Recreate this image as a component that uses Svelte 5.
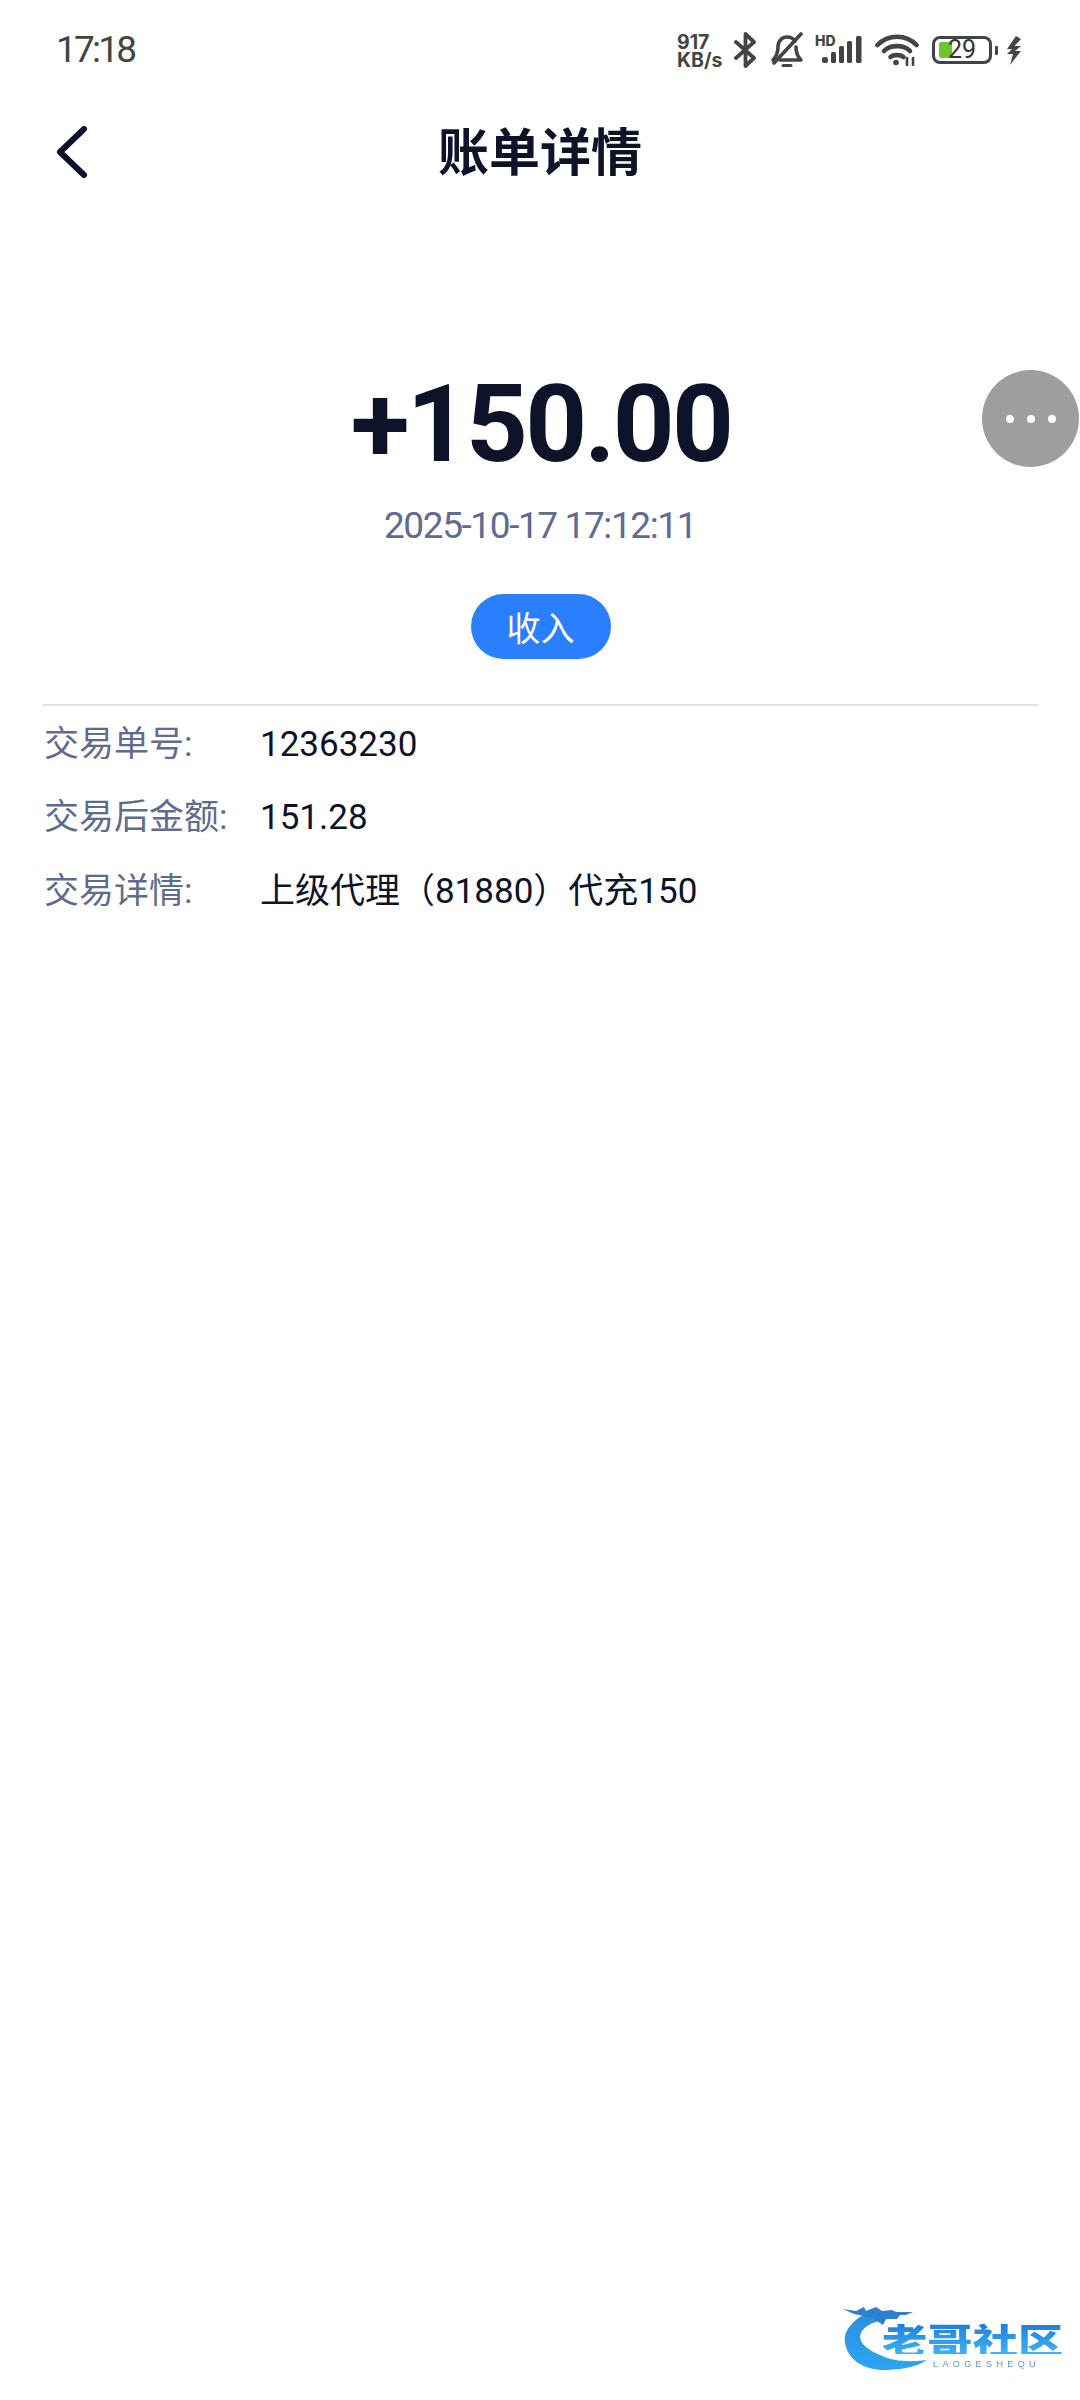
<script>
  const rows = [
    { label: '交易单号:', value: '12363230' },
    { label: '交易后金额:', value: '151.28' },
    { label: '交易详情:', value: '上级代理（81880）代充150' }
  ];
</script>

<div class="page">
  <header class="status">
    <span class="time">17:18</span>
    <div class="icons">
      <div class="speed"><span>917</span><span>KB/s</span></div>
      <svg class="bt" width="23" height="36" viewBox="0 0 23 36" fill="none" stroke="#444" stroke-width="3.8" stroke-linejoin="round" stroke-linecap="round"><path d="M2 10 L20 26 L11.5 34 V2 L20 10 L2 26" /></svg>
      <svg class="bell" width="34" height="36" viewBox="0 0 34 36" fill="none" stroke="#444" stroke-width="3.6" stroke-linecap="round" stroke-linejoin="round">
        <path d="M3 28 C7 24 8 21 8 15 C8 9 12 5 17 5 C20 5 23 6 25 9" />
        <path d="M26 15 C26 21 27 24 31 28 H10" />
        <path d="M4 31 L31 2" />
        <path d="M13 33.5 H21" stroke-width="3" />
      </svg>
      <svg class="signal" width="48" height="36" viewBox="0 -6 48 36" fill="#444">
        <text x="0" y="11" font-family="Inter, sans-serif" font-size="14" font-weight="800">HD</text>
        <rect x="7" y="22" width="6" height="6" rx="2" />
        <rect x="16" y="17" width="5" height="11" rx="1.5" />
        <rect x="24" y="11" width="5" height="17" rx="1.5" />
        <rect x="32" y="6" width="5" height="22" rx="1.5" />
        <rect x="41" y="1" width="5.5" height="27" rx="1.5" />
      </svg>
      <svg class="wifi" width="44" height="32" viewBox="0 0 44 32" fill="none" stroke="#444" stroke-width="4.6" stroke-linecap="round">
        <path d="M2.5 11 C13 0 31 0 41.5 11" />
        <path d="M9 17 C15 10.5 29 10.5 35 17" />
        <path d="M15.5 23 C18.5 20.5 25.5 20.5 28.5 23" />
        <circle cx="21" cy="28.5" r="2.8" fill="#444" stroke="none" />
        <path d="M32 24 V31 M38 24 V31" stroke-width="2.6" />
      </svg>
      <div class="battery">
        <div class="shell"><span class="level"></span><span class="pct">29</span></div>
        <span class="tip"></span>
      </div>
      <svg class="bolt" width="16" height="29" viewBox="0 0 16 29" fill="#444"><path d="M10 0 L1 13 H6 L1 18 H7 L4 29 L15 15 H9 L15 10 H8.5 L15 3 Z" /></svg>
    </div>
  </header>

  <nav class="nav">
    <svg class="back" width="32" height="52" viewBox="0 0 32 52" fill="none" stroke="#0d1329" stroke-width="6" stroke-linecap="round" stroke-linejoin="round"><path d="M28 3 L4 26 L28 49" /></svg>
    <h1>账单详情</h1>
  </nav>

  <section class="summary">
    <div class="amount">+150.00</div>
    <div class="date">2025-10-17 17:12:11</div>
    <div class="pill">收入</div>
  </section>

  <section class="details">
    {#each rows as row}
      <div class="row">
        <span class="label">{row.label}</span>
        <span class="value">{row.value}</span>
      </div>
    {/each}
  </section>

  <button class="fab" aria-label="更多"><i></i><i></i><i></i></button>

  <div class="mark">
    <svg class="dragon" width="110" height="70" viewBox="0 0 110 70">
      <defs>
        <linearGradient id="dr" x1="0" y1="0" x2="0" y2="1">
          <stop offset="0" stop-color="#2d8fdc" />
          <stop offset="1" stop-color="#2aa6f2" />
        </linearGradient>
      </defs>
      <path fill="url(#dr)" d="M21 10 C8 18 1 28 3 38 C6 56 24 66 46 65 C62 64 74 62 85 55 C70 57 52 57 38 50 C24 44 14 36 20 26 C24 20 32 17 41 15 L34 6 C29 6 25 7 21 10 Z" />
      <path fill="#2b80cf" d="M1 4 L14 6 L22 2 L24 6 L34 2 L40 6 L50 5 L54 7 L71 7 L64 10 L58 10 L55 14 L44 14 L41 20 L32 14 L22 11 L12 9 Z" />
    </svg>
    <div class="mark-title">老哥社区</div>
    <div class="mark-sub">LAOGESHEQU</div>
  </div>
</div>

<style>
  :global(body) {
    margin: 0;
    background: #fff;
  }

  .page {
    position: relative;
    width: 1080px;
    height: 2400px;
    overflow: hidden;
    background: #fff;
    font-family: Roboto, "Noto Sans CJK SC", sans-serif;
    color: #0d1329;
  }

  .status {
    display: flex;
    align-items: center;
    justify-content: space-between;
    height: 50px;
    padding: 25px 58px 0 56px;
  }

  .time {
    font-size: 37px;
    line-height: 50px;
    letter-spacing: -2.8px;
    color: #444;
  }

  .icons {
    display: flex;
    align-items: center;
  }

  .speed {
    display: flex;
    flex-direction: column;
    width: 49px;
    font-family: Inter, sans-serif;
    font-size: 19.5px;
    font-weight: 700;
    line-height: 18px;
    color: #444;
    white-space: nowrap;
    margin-top: 1px;
  }

  .bt { margin-left: 8px; }
  .bell { margin-left: 13px; }
  .signal { margin-left: 11px; margin-top: -6px; }
  .wifi { margin-left: 12px; }

  .battery {
    display: flex;
    align-items: center;
    margin-left: 13px;
  }

  .shell {
    position: relative;
    box-sizing: border-box;
    width: 60px;
    height: 28px;
    border: 3px solid #444;
    border-radius: 8px;
  }

  .level {
    position: absolute;
    left: 4px;
    top: 3px;
    width: 13px;
    height: 16px;
    background: #6cc72f;
    border-radius: 2px;
  }

  .pct {
    position: absolute;
    left: 13px;
    top: 0;
    font-size: 25px;
    line-height: 22px;
    font-weight: 400;
    color: #333;
  }

  .tip {
    width: 3px;
    height: 9px;
    margin-left: 3px;
    background: #444;
    border-radius: 1px;
  }

  .bolt { margin-left: 8px; }

  .nav {
    position: relative;
    display: flex;
    justify-content: center;
    align-items: center;
    height: 80px;
    margin-top: 37px;
  }

  .back {
    position: absolute;
    left: 56px;
    top: 14px;
  }

  h1 {
    margin: 0 0 6px;
    font-size: 51px;
    line-height: 74px;
    font-weight: 700;
    font-family: "Noto Sans CJK SC", sans-serif;
    color: #0d1329;
  }

  .summary {
    display: flex;
    flex-direction: column;
    align-items: center;
    margin-top: 172px;
  }

  .amount {
    font-size: 108px;
    line-height: 120px;
    font-weight: 700;
    letter-spacing: -2.8px;
    margin-left: 2px;
    color: #0d1329;
  }

  .date {
    margin-top: 17px;
    font-size: 37px;
    line-height: 50px;
    letter-spacing: -1.4px;
    color: #5f6b8f;
  }

  .pill {
    display: flex;
    align-items: center;
    justify-content: center;
    width: 140px;
    height: 65px;
    margin-top: 43px;
    margin-left: 1px;
    border-radius: 33px;
    background: #2a7fff;
    color: #fff;
    font-size: 34px;
    font-family: "Noto Sans CJK SC", sans-serif;
  }

  .details {
    margin: 45px 41px 0 43px;
    border-top: 2px solid #e2e2e2;
    padding-top: 2px;
  }

  .row {
    display: flex;
    height: 73.5px;
    align-items: center;
    font-size: 35px;
    line-height: 50px;
  }

  .label {
    width: 217px;
    padding-left: 1px;
    box-sizing: border-box;
    color: #5f6b8f;
    flex: none;
  }

  .value {
    color: #0d1329;
  }

  .fab {
    position: absolute;
    left: 982px;
    top: 370px;
    display: flex;
    align-items: center;
    justify-content: center;
    gap: 13px;
    width: 97px;
    height: 97px;
    padding: 0;
    border: 0;
    border-radius: 50%;
    background: #9e9e9e;
  }

  .fab i {
    width: 8px;
    height: 8px;
    border-radius: 50%;
    background: #fff;
  }

  .mark {
    position: absolute;
    left: 842px;
    top: 2305px;
    width: 225px;
    height: 70px;
    filter: blur(0.6px);
  }

  .dragon {
    position: absolute;
    left: 0;
    top: 0;
  }

  .mark-title {
    position: absolute;
    left: 40px;
    top: 19px;
    font-family: "Noto Sans CJK SC", sans-serif;
    font-size: 44px;
    font-weight: 900;
    line-height: 38px;
    white-space: nowrap;
    transform: scale(1.03, 0.8);
    transform-origin: left top;
    background: linear-gradient(180deg, #1c7fdc, #3fb4f5);
    -webkit-background-clip: text;
    background-clip: text;
    color: transparent;
  }

  .mark-sub {
    position: absolute;
    left: 91px;
    top: 55px;
    font-family: "Liberation Sans", sans-serif;
    font-size: 9px;
    line-height: 9px;
    letter-spacing: 4.4px;
    color: #5f93c4;
    white-space: nowrap;
  }
</style>
